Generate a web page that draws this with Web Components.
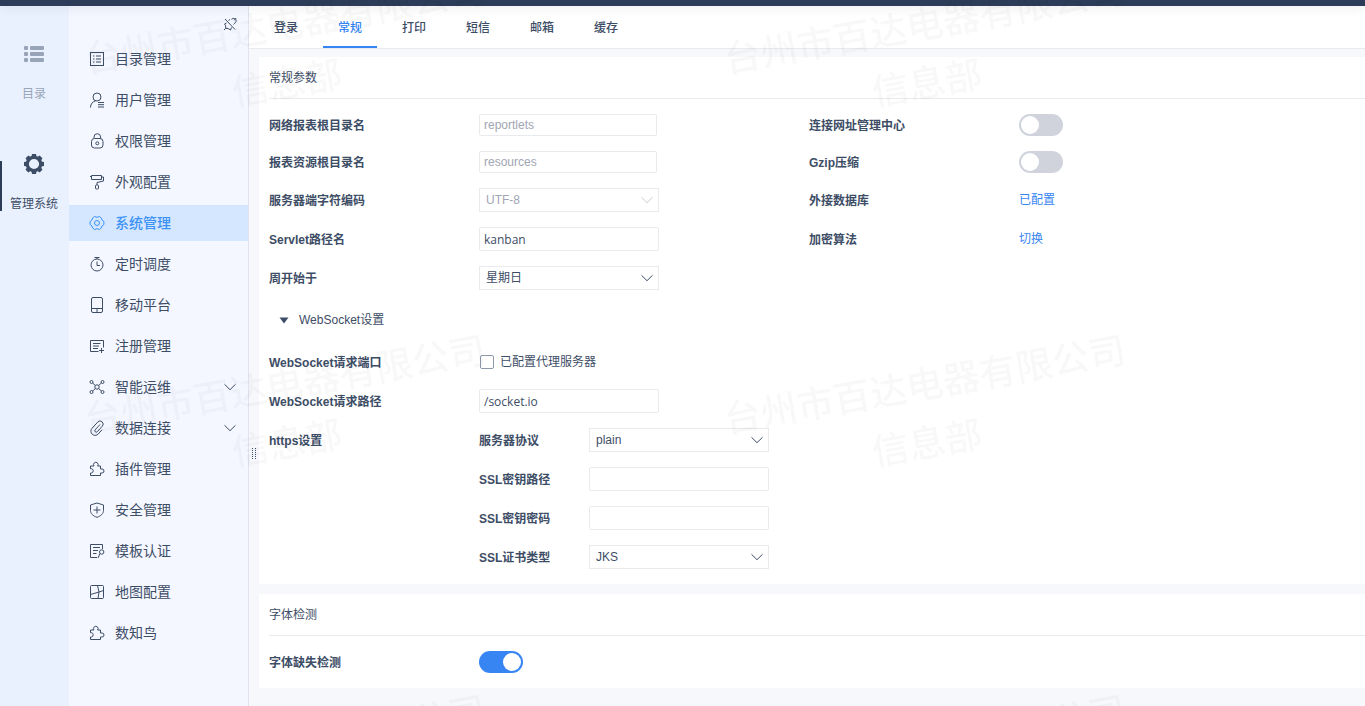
<!DOCTYPE html>
<html lang="zh-CN">
<head>
<meta charset="utf-8">
<title>系统管理</title>
<style>
  html, body { margin: 0; }
  body {
    --ink: #3d4d66;
    --accent: #3685f2;
    --line: #e8eaed;
    font: 12px/24px "Liberation Sans", "Noto Sans CJK SC", sans-serif;
    color: var(--ink);
    background: #f7f8fb;
  }
</style>
</head>
<body>
<admin-shell>
  <rail-item slot="rail" icon="list">目录</rail-item>
  <rail-item slot="rail" icon="gear" active>管理系统</rail-item>

  <menu-item slot="menu" icon="catalog">目录管理</menu-item>
  <menu-item slot="menu" icon="user">用户管理</menu-item>
  <menu-item slot="menu" icon="lock">权限管理</menu-item>
  <menu-item slot="menu" icon="roller">外观配置</menu-item>
  <menu-item slot="menu" icon="cog" active>系统管理</menu-item>
  <menu-item slot="menu" icon="timer">定时调度</menu-item>
  <menu-item slot="menu" icon="mobile">移动平台</menu-item>
  <menu-item slot="menu" icon="register">注册管理</menu-item>
  <menu-item slot="menu" icon="nodes" expandable>智能运维</menu-item>
  <menu-item slot="menu" icon="clip" expandable>数据连接</menu-item>
  <menu-item slot="menu" icon="puzzle">插件管理</menu-item>
  <menu-item slot="menu" icon="shield">安全管理</menu-item>
  <menu-item slot="menu" icon="certificate">模板认证</menu-item>
  <menu-item slot="menu" icon="map">地图配置</menu-item>
  <menu-item slot="menu" icon="puzzle">数知鸟</menu-item>

  <tab-item slot="tabs">登录</tab-item>
  <tab-item slot="tabs" active>常规</tab-item>
  <tab-item slot="tabs">打印</tab-item>
  <tab-item slot="tabs">短信</tab-item>
  <tab-item slot="tabs">邮箱</tab-item>
  <tab-item slot="tabs">缓存</tab-item>

  <settings-card heading="常规参数">
    <field-pair>
      <text-field label="网络报表根目录名" value="reportlets" disabled></text-field>
      <switch-field label="连接网址管理中心"></switch-field>
    </field-pair>
    <field-pair>
      <text-field label="报表资源根目录名" value="resources" disabled></text-field>
      <switch-field label="Gzip压缩"></switch-field>
    </field-pair>
    <field-pair>
      <select-field label="服务器端字符编码" options="UTF-8,GBK" disabled></select-field>
      <link-field label="外接数据库" text="已配置"></link-field>
    </field-pair>
    <field-pair>
      <text-field label="Servlet路径名" value="kanban"></text-field>
      <link-field label="加密算法" text="切换"></link-field>
    </field-pair>
    <select-field label="周开始于" options="星期日,星期一"></select-field>
    <fold-header>WebSocket设置</fold-header>
    <check-field label="WebSocket请求端口" text="已配置代理服务器"></check-field>
    <text-field label="WebSocket请求路径" value="/socket.io"></text-field>
    <field-group label="https设置">
      <select-field label="服务器协议" options="plain,https"></select-field>
      <text-field label="SSL密钥路径"></text-field>
      <text-field label="SSL密钥密码"></text-field>
      <select-field label="SSL证书类型" options="JKS,PKCS12"></select-field>
    </field-group>
  </settings-card>

  <settings-card heading="字体检测">
    <switch-field label="字体缺失检测" checked></switch-field>
  </settings-card>
</admin-shell>
<water-mark></water-mark>

<script>
const ICONS = {
  list: '<g fill="currentColor" stroke="none"><rect x="0" y="2" width="4" height="4" rx="1"/><rect x="6" y="2" width="14" height="4" rx="1"/><rect x="0" y="8" width="4" height="4" rx="1"/><rect x="6" y="8" width="14" height="4" rx="1"/><rect x="0" y="14" width="4" height="4" rx="1"/><rect x="6" y="14" width="14" height="4" rx="1"/></g>',
  gear: '<circle cx="10" cy="10" r="6.700" stroke-width="3.200"/><g fill="currentColor" stroke="none"><path d="M8 0h4l.6 3H7.400ZM8 20h4l.6-3H7.400ZM0 8v4l3 .6V7.400ZM20 8v4l-3 .6V7.400Z"/><path transform="rotate(45 10 10)" d="M8 0h4l.6 3H7.400ZM8 20h4l.6-3H7.400ZM0 8v4l3 .6V7.400ZM20 8v4l-3 .6V7.400Z"/></g>',
  catalog: '<rect x="1.500" y="1.500" width="13" height="13"/><path d="M4 5h1.500M7 5h5M4 8h1.500M7 8h5M4 11h1.500M7 11h5"/>',
  user: '<circle cx="8" cy="5" r="4"/><path d="M1.500 15.500C1.500 12 3.600 9.600 6.500 9M9 10.500h6M9 12.700h6M9 15h6"/>',
  lock: '<rect x="2.500" y="5.500" width="11.500" height="9.500" rx="3"/><path d="M5 5.500V4a3.300 3.300 0 0 1 6.600 0v1.500"/><circle cx="8.300" cy="10.300" r="1.500"/>',
  roller: '<path d="M1 2.500h1.500M2.500 1.500h10v4h-10zM12.500 3H14.500v4l-6.500 1.500V11"/><rect x="6.500" y="11" width="3" height="4" rx="1"/>',
  cog: '<path d="M5.600 1.500 8 2.300 10.400 1.500 12.300 3 13 5 14.900 6.500V9.500L13 11 12.300 13 10.400 14.500 8 13.700 5.600 14.500 3.700 13 3 11 1.100 9.500V6.500L3 5 3.700 3Z" stroke-linejoin="round"/><circle cx="8" cy="8" r="2.500"/>',
  timer: '<circle cx="8" cy="9" r="6"/><path d="M5.500 1.500h5M8 1.500V3M8 5.500V9.500h3"/>',
  mobile: '<rect x="2.500" y=".5" width="11" height="15" rx="1.500"/><path d="M2.500 11.500h11M8 12v3"/>',
  register: '<path d="M9.500 13.500h-8v-11h13v7M4 5.500h7.500M4 8h6M4 10.500h5M12.500 10v5M10 12.500h5"/>',
  nodes: '<circle cx="8" cy="8" r="2.200"/><circle cx="2.500" cy="3" r="1.500"/><circle cx="13.500" cy="3" r="1.500"/><circle cx="2.500" cy="13" r="1.500"/><circle cx="13.500" cy="13" r="1.500"/><path d="M3.600 4 6.400 6.500M12.400 4 9.600 6.500M3.600 12l2.800-2.500M12.400 12 9.600 9.500"/>',
  clip: '<path d="M11 4.500 6.200 9.800a1.400 1.400 0 0 0 2.100 1.900l5-5.500a3 3 0 0 0-4.500-4.200L3 8.300a4.200 4.200 0 0 0 6.200 5.700L13 9.800"/>',
  puzzle: '<path d="M1.500 5H5a2.300 2.300 0 1 1 3.600 0H11.500V8h1.500a2 2 0 0 1 0 4h-1.500v2.500H1.500V12h1a2.200 2.200 0 0 0 0-4.300h-1Z" stroke-linejoin="round"/>',
  shield: '<path d="M8 1 14.500 3v5.500C14.500 11.500 12 14 8 15.300 4 14 1.500 11.500 1.500 8.500V3ZM8 4.500v7M4.500 8h7" stroke-linejoin="round"/>',
  certificate: '<path d="M8 14.500h-6.500v-13h12V6M4 4.500h7M4 7.500h5M4 10.500h3.500M11 10.500l-2 4.500"/><circle cx="12.700" cy="9" r="2.200"/>',
  map: '<rect x="1.500" y="1.500" width="13" height="13" rx="1"/><path d="M8.500 1.500 10 8 14.500 6.500M1.500 10.500 10 8l-1 6.500"/>',
  unpin: '<path d="M3 3 13 13.500M6.500 4.500 8 3.500M9.500 3.300C11 1.600 14.800 2.500 14 5.500c-.3 1.200-1.500 1.700-2.500 3M12.200 4.200l2-2.200M4.500 7 2.500 8l1.200 1.800v2.500l2.500.2L8.500 14 9.500 11.500M3.700 12.300 2 14"/>',
  chevron: '<path d="M2.500 5.300 8 10.700 13.500 5.300"/>'
};
const icon = (name, size = 16) =>
  `<svg class="icon" width="${size}" height="${size}" viewBox="0 0 ${size} ${size}" fill="none" stroke="currentColor" aria-hidden="true">${ICONS[name]}</svg>`;

class Base extends HTMLElement {
  connectedCallback() {
    if (this.shadowRoot) return;
    const template = document.createElement('template');
    template.innerHTML = `<style>*{box-sizing:border-box}.icon{display:block;flex:none}${this.css()}</style>${this.html()}`;
    this.attachShadow({ mode: 'open' }).append(template.content.cloneNode(true));
  }
  attr(name) { return this.getAttribute(name) || ''; }
}

customElements.define('admin-shell', class extends Base {
  css() { return `
    :host { display: flex; flex-direction: column; min-height: 100vh; }
    header { height: 6px; background: #2d3c58; box-shadow: 0 2px 10px rgba(45,60,88,.1); position: relative; z-index: 1; }
    .body { flex: 1; display: flex; }
    .rail { width: 69px; flex: none; background: #eaf1fe; padding-top: 35px; display: flex; flex-direction: column; gap: 45px; }
    .menu { width: 180px; flex: none; background: #f4f7ff; border-right: 1px solid #dfe4f0; display: flex; flex-direction: column; gap: 5px; }
    .tools { height: 30px; padding: 10px 10px 0; display: flex; justify-content: flex-end; }
    .tools button { border: 0; padding: 0; background: none; color: inherit; height: 16px; }
    main { flex: 1; min-width: 0; display: flex; flex-direction: column; }
    .tabs { height: 43px; background: #fff; border-bottom: 1px solid var(--line); padding-left: 10px; display: flex; gap: 10px; }
    .content { flex: 1; display: flex; }
    .gutter { width: 10px; flex: none; display: flex; flex-direction: column; align-items: center; }
    .gutter::before { content: ""; flex: 13; }
    .gutter::after { content: ""; flex: 8; }
    .grip { width: 4px; height: 12px; display: flex; justify-content: space-between; }
    .grip::before, .grip::after { content: ""; width: 1px; background: repeating-linear-gradient(#3d4d66 0 1px, transparent 1px 2px); }
    .cards { flex: 1; min-width: 0; padding-top: 8px; display: flex; flex-direction: column; gap: 10px; }`; }
  html() { return `
    <header></header>
    <div class="body">
      <nav class="rail"><slot name="rail"></slot></nav>
      <nav class="menu"><div class="tools"><button type="button" aria-label="取消固定">${icon('unpin')}</button></div><slot name="menu"></slot></nav>
      <main>
        <div class="tabs" role="tablist"><slot name="tabs"></slot></div>
        <div class="content"><div class="gutter"><div class="grip"></div></div><div class="cards"><slot></slot></div></div>
      </main>
    </div>`; }
});

customElements.define('rail-item', class extends Base {
  css() { return `
    :host { display: block; color: #98a5b9; }
    :host([active]) { color: var(--ink); }
    a { height: 65px; padding: 3px 1px 0 0; display: flex; flex-direction: column; align-items: center; justify-content: space-between; color: inherit; text-decoration: none; }
    :host([active]) a { background: linear-gradient(#2d3c58 0 0) 0 10px / 2px 50px no-repeat; }
    `; }
  html() { return `<a href="#">${icon(this.attr('icon'), 20)}<span><slot></slot></span></a>`; }
});

customElements.define('menu-item', class extends Base {
  css() { return `
    :host { display: block; font-size: 14px; }
    a { height: 36px; padding: 0 10px 0 20px; display: flex; align-items: center; gap: 10px; color: inherit; text-decoration: none; }
    span { flex: 1; }
    :host([active]) a { background: #d5e7fe; color: #3c92f7; font-weight: 500; }`; }
  html() { return `<a href="#">${icon(this.attr('icon'))}<span><slot></slot></span>${this.hasAttribute('expandable') ? icon('chevron') : ''}</a>`; }
});

customElements.define('tab-item', class extends Base {
  css() { return `
    :host { display: block; }
    button { width: 54px; height: 42px; padding: 4px 0 0; border: 0; border-bottom: 2px solid transparent; background: none; font: inherit; font-weight: 500; color: inherit; }
    :host([active]) button { color: var(--accent); border-color: var(--accent); }`; }
  html() { return `<button type="button" role="tab" aria-selected="${this.hasAttribute('active')}"><slot></slot></button>`; }
});

customElements.define('settings-card', class extends Base {
  css() { return `
    :host { display: block; background: #fff; padding: 0 0 15px 10px; }
    h2 { margin: 0 0 15px; height: 42px; line-height: 42px; font-size: 12px; font-weight: 400; border-bottom: 1px solid var(--line); }
    .rows { display: flex; flex-direction: column; gap: 15px; }`; }
  html() { return `<h2>${this.attr('heading')}</h2><div class="rows"><slot></slot></div>`; }
});

customElements.define('field-pair', class extends Base {
  css() { return `:host { display: grid; grid-template-columns: 540px 1fr; }`; }
  html() { return `<slot></slot>`; }
});

customElements.define('field-group', class extends Base {
  css() { return `
    :host { display: flex; }
    h3 { margin: 0; padding-top: 1px; width: 210px; font-size: 12px; font-weight: 700; }
    .rows { --label: 110px; display: flex; flex-direction: column; gap: 15px; }`; }
  html() { return `<h3>${this.attr('label')}</h3><div class="rows" role="group" aria-label="${this.attr('label')}"><slot></slot></div>`; }
});

customElements.define('fold-header', class extends Base {
  css() { return `
    :host { display: block; }
    button { height: 30px; border: 0; background: none; padding: 0 10px; font: inherit; color: inherit; display: flex; align-items: center; gap: 10px; }`; }
  html() { return `<button type="button" aria-expanded="true"><svg class="icon" width="10" height="10" viewBox="0 0 10 10" fill="currentColor"><path d="M.5 2.500h9L5 8.500Z"/></svg><slot></slot></button>`; }
});

class Field extends Base {
  css() { return `
    :host { display: flex; align-items: center; }
    .name { width: var(--label, 210px); flex: none; font-weight: 700; line-height: 20px; padding-top: 2px; }
    ${this.controlCss()}`; }
  html() { return `<label class="name" for="c">${this.attr('label')}</label>${this.control()}`; }
  get off() { return this.hasAttribute('disabled') ? 'disabled' : ''; }
}

customElements.define('text-field', class extends Field {
  controlCss() { return `
    input { width: 180px; height: 24px; padding: 0 4px; border: 1px solid var(--line); border-radius: 2px; background: #fff; color: inherit; font: 12px "Open Sans", "Noto Sans CJK SC", sans-serif; }
    input:disabled { width: 178px; height: 22px; color: #9fa6b3; font-family: "Liberation Sans", sans-serif; }`; }
  control() { return `<input id="c" type="text" value="${this.attr('value')}" ${this.off}>`; }
});

customElements.define('select-field', class extends Field {
  controlCss() { return `
    .box { position: relative; width: 180px; }
    select { appearance: none; display: block; width: 100%; height: 24px; padding: 0 24px 0 6px; border: 1px solid var(--line); border-radius: 0; background: #fff; color: inherit; font: inherit; line-height: 20px; opacity: 1; }
    .icon { position: absolute; right: 4px; top: 4px; pointer-events: none; }
    :host([disabled]) .box { color: #9fa6b3; }
    :host([disabled]) .icon { color: #c8cdd6; }`; }
  control() {
    const options = this.attr('options').split(',').map(o => `<option>${o}</option>`).join('');
    return `<div class="box"><select id="c" ${this.off}>${options}</select>${icon('chevron')}</div>`;
  }
});

customElements.define('switch-field', class extends Field {
  controlCss() { return `
    input { appearance: none; width: 44px; height: 22px; margin: 0; padding: 2px; border-radius: 11px; background: #d0d3dc; display: flex; }
    input::before { content: ""; width: 18px; height: 18px; border-radius: 50%; background: #fff; }
    input:checked { background: var(--accent); justify-content: flex-end; }`; }
  control() { return `<input id="c" type="checkbox" role="switch" ${this.hasAttribute('checked') ? 'checked' : ''}>`; }
});

customElements.define('link-field', class extends Field {
  controlCss() { return `a { color: var(--accent); text-decoration: none; }`; }
  control() { return `<a href="#" aria-labelledby="n v" id="v">${this.attr('text')}</a>`; }
  html() { return `<span class="name" id="n">${this.attr('label')}</span>${this.control()}`; }
});

customElements.define('check-field', class extends Field {
  controlCss() { return `
    .option { display: flex; align-items: center; gap: 6px; padding-left: 1px; }
    input { appearance: none; width: 14px; height: 14px; margin: 0; border: 1px solid #8d98ab; border-radius: 2px; background: #fff; }`; }
  control() { return `<label class="option"><input id="c" type="checkbox">${this.attr('text')}</label>`; }
});

/* Repeating diagonal company mark laid over the whole window. */
customElements.define('water-mark', class extends Base {
  css() { return `
    :host { position: fixed; inset: 0; overflow: hidden; pointer-events: none; z-index: 5; }
    svg { display: block; width: 100%; height: 100%; }
    text { font: 500 37px "Noto Sans CJK SC", sans-serif; fill: #000; fill-opacity: .026; text-anchor: middle; }`; }
  html() {
    let marks = '';
    for (const x of [285, 925]) for (const y of [26, 386, 746])
      marks += `<g transform="translate(${x} ${y}) rotate(-10)"><text y="12">台州市百达电器有限公司</text><text x="-8" y="70">信息部</text></g>`;
    return `<svg aria-hidden="true">${marks}</svg>`;
  }
});
</script>
</body>
</html>
